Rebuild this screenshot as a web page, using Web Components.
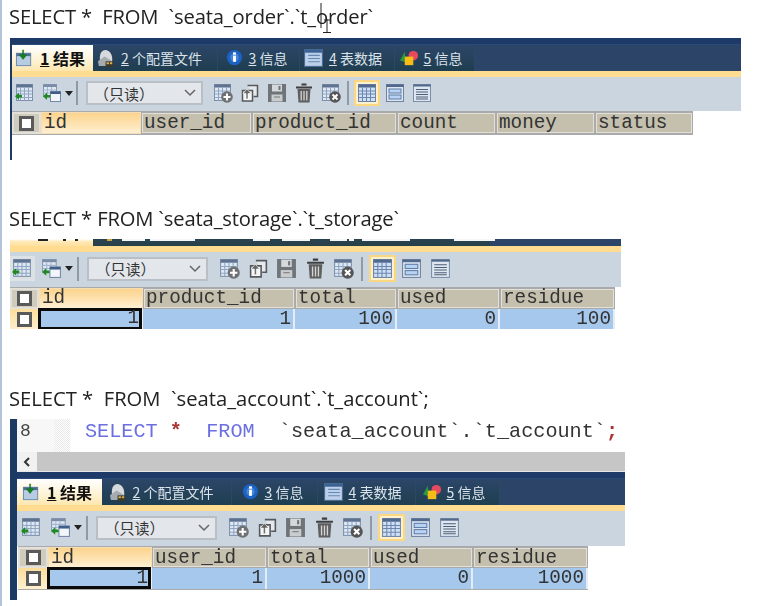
<!DOCTYPE html>
<html lang="zh"><head><meta charset="utf-8"><title>seata</title>
<style>html,body{margin:0;background:#fff;overflow:hidden}</style></head>
<body>
<sql-page>
  <sql-title first style="height:32px;padding-bottom:6px">SELECT *  FROM  `seata_order`.`t_order`<text-cursor slot="cursor"></text-cursor></sql-title>
  <result-panel edge="2" width="731" height="122">
    <rs-tabs widths="81,125,82,95,80" height="33"></rs-tabs>
    <rs-toolbar pad="3" sel="117" ico="20" gap="7" height="34"></rs-toolbar>
    <rs-grid cols="29,100,111,145,99,99,98" head="id,user_id,product_id,count,money,status" hh="22" pt="2"></rs-grid>
  </result-panel>
  <sql-title style="margin-top:41px;height:33px;padding-bottom:5px">SELECT * FROM `seata_storage`.`t_storage`</sql-title>
  <result-panel edge="0" width="611" height="90">
    <rs-strip></rs-strip>
    <rs-toolbar pad="2" sel="121" ico="21" gap="7.6" height="35" hot></rs-toolbar>
    <rs-grid cols="29,104,152,102,103,115" head="id,product_id,total,used,residue" row="1,1,100,0,100" hh="21"></rs-grid>
  </result-panel>
  <sql-title style="margin-top:52px;height:33px;padding-bottom:5px;letter-spacing:0">SELECT *  FROM  `seata_account`.`t_account`;</sql-title>
  <result-panel edge="7" width="615" height="181">
    <sql-editor>SELECT *  FROM  `seata_account`.`t_account`;</sql-editor>
    <rs-tabs widths="85,130,86,98,84" height="33"></rs-tabs>
    <rs-toolbar pad="4" sel="121" ico="21" gap="7.6" height="35"></rs-toolbar>
    <rs-grid cols="30,104,115,103,103,115" head="id,user_id,total,used,residue" row="1,1,1000,0,1000" hh="21" pt="2" vt="1" ml="1"></rs-grid>
  </result-panel>
</sql-page>
<script>
const T='<rect x="1.500" y="1.500" width="16" height="16" fill="#dfe7f2" stroke="#7d8fa8"/><rect x="1.500" y="1.500" width="16" height="3" fill="#5f7391"/><path d="M1.500 8h16M1.500 11h16M1.500 14.500h16M5.500 4.500v13M9.500 4.500v13M13.500 4.500v13" stroke="#8ea5c4" fill="none"/>';
const svg=(b,s=20)=>`<svg viewBox="0 0 20 20" width="${s}" height="${s}" aria-hidden="true">${b}</svg>`;
const ICON={
 add:T+'<path d="M4 9.500v2.500h3v2.500H4V17l-4-3.750z" fill="#1f8a22"/>',
 exp:'<rect x="1.500" y="1.500" width="13" height="12" fill="#dfe7f2" stroke="#8597b0"/><rect x="1.500" y="1.500" width="13" height="2.500" fill="#7a8ca8"/><path d="M1.500 7h13M1.500 10h13M5.500 4v9M9.500 4v9" stroke="#a4b6cf"/><rect x="8.500" y="8.500" width="10" height="10" fill="#f2f5f9" stroke="#7388a6"/><rect x="8.500" y="8.500" width="10" height="2.500" fill="#3f5f8a"/><path d="M5 9.500v2.500h3v2.500H5V17l-4-3.750z" fill="#1f8a22"/>',
 plus:T+'<circle cx="14" cy="14" r="5.800" fill="#6e7072"/><path d="M14 10.500v7M10.500 14h7" stroke="#fff" stroke-width="2"/>',
 rst:'<path d="M7.500 2.500h10v11h-4" fill="#e5e8ec" stroke="#56585b" stroke-width="1.500"/><path d="M2.500 7.500h10v10.500h-10z" fill="#f4f5f6" stroke="#56585b" stroke-width="1.500"/><path d="M8 16V10.500H11L7 6 3 10.500H6V16z" fill="#666" stroke="#fff" stroke-width=".6"/>',
 save:'<path d="M1 1h18v18H1z" fill="#6f7478"/><rect x="5" y="1.500" width="10" height="7" fill="#d5d9dc"/><rect x="11.500" y="3" width="2" height="4" fill="#6f7478"/><rect x="4.500" y="11.500" width="11" height="7" fill="#c9cccf"/><path d="M7 14h6" stroke="#777"/>',
 del:'<path d="M7.500 1.500h5M2 4.500h16" stroke="#3e3e3e" stroke-width="2"/><path d="M3.500 6h13l-1 13.500h-11z" fill="#5e5e5e"/><path d="M7.200 8v9.500M10 8v9.500M12.800 8v9.500" stroke="#d6d6d6" stroke-width="1.300"/>',
 rm:T+'<circle cx="14" cy="14" r="5.800" fill="#555"/><path d="M11.500 11.500l5 5M16.500 11.500l-5 5" stroke="#fff" stroke-width="2"/>',
 grid:'<rect x="1.500" y="1.500" width="17" height="17" fill="#cfe0f6" stroke="#6f83a1"/><rect x="1.500" y="1.500" width="17" height="3" fill="#50698c"/><path d="M1.500 8h17M1.500 11h17M1.500 14.500h17M5.500 4.500v14M9.500 4.500v14M13.500 4.500v14" stroke="#6b87ae"/>',
 form:'<rect x="1.500" y="1.500" width="17" height="17" fill="#dde6f1" stroke="#6f83a1"/><rect x="1.500" y="1.500" width="17" height="2.500" fill="#50698c"/><rect x="4" y="6" width="12" height="4" fill="#b7d2f3" stroke="#5f7da6"/><rect x="4" y="12" width="12" height="4" fill="#b7d2f3" stroke="#5f7da6"/>',
 text:'<rect x="1.500" y="1.500" width="17" height="17" fill="#dde6f1" stroke="#7b8ea8"/><rect x="1.500" y="1.500" width="17" height="2" fill="#50698c"/><path d="M4 6.500h12M4 9h12M4 11.500h12M4 14h12M4 16h12" stroke="#4e5f75" stroke-width="1"/>',
 t1:'<rect x="1.500" y="4.500" width="15" height="13" fill="#b7cbe2" stroke="#6b89ad"/><rect x="1.500" y="4.500" width="15" height="3" fill="#4e7098"/><path d="M9 1v5h3.500L8.500 11 4.500 6H8V1z" fill="#14841f" stroke="#0d6a18" stroke-width=".5"/>',
 t2:'<path d="M3 9c0-5 2.500-8 6-8s7 4 7 9v5H3z" fill="#d6dadd"/><path d="M1 13l7-5 7 4v6H2z" fill="#a5abb0"/><rect x="9" y="13" width="8" height="6" fill="#3d3a28"/><rect x="10" y="14" width="2.500" height="2" fill="#d9b455"/><rect x="13.500" y="14" width="2.500" height="2" fill="#d9b455"/>',
 t3:'<circle cx="10" cy="9" r="8" fill="#1b62c4"/><circle cx="10" cy="9" r="4.500" fill="#6fa8ee" opacity=".5"/><rect x="8.500" y="3.500" width="3" height="2.500" fill="#fff"/><rect x="8.500" y="7" width="3" height="6.500" fill="#fff"/>',
 t4:'<rect x="1.500" y="1.500" width="17" height="16" fill="#bdd0ea" stroke="#4c6c96"/><rect x="1.500" y="1.500" width="17" height="3" fill="#3d6394"/><path d="M5 7h11M5 10h11M5 13h11" stroke="#6488b5"/>',
 t5:'<path d="M0 12l5-9 1 11z" fill="#2d9a3d"/><circle cx="14" cy="7" r="5" fill="#e8495f"/><rect x="5" y="8" width="9" height="9" fill="#f6bd16"/>'
};
function def(name,fn){customElements.define(name,class extends HTMLElement{connectedCallback(){if(!this.shadowRoot){this.attachShadow({mode:'open'}).innerHTML=fn(this)}}})}
def('sql-page',()=>`<style>:host{display:block;width:762px;height:606px;border-left:2px solid #b5c3d8;overflow:hidden;filter:blur(.45px)}</style><slot></slot>`);
def('text-cursor',()=>`<style>:host{position:absolute;left:318px;top:3px;width:12px;height:31px}</style><svg width="12" height="31" aria-hidden="true"><path d="M1 0v25M7 16v13M4 17h6M3 29.500h8" stroke="#222" fill="none"/></svg>`);
def('sql-title',()=>`<style>:host{display:flex;align-items:center;position:relative;padding:0 0 4px 7px;font:20.200px "Open Sans","Noto Sans",sans-serif;color:#222;white-space:pre;letter-spacing:-.15px}</style><slot></slot><slot name="cursor"></slot>`);
def('result-panel',e=>{const w=+e.getAttribute('width'),h=+e.getAttribute('height'),b=+e.getAttribute('edge');return `<style>:host{display:block;box-sizing:border-box;margin-left:8px;width:${w}px;height:${h}px;border-left:${b}px solid #1d3a64;overflow:hidden}</style><slot></slot>`});
def('sql-editor',()=>`<style>:host{display:block}
.l{display:flex;height:33px;background:#fff;font:20.200px/25px "Liberation Mono",monospace;white-space:pre;color:#333}
.g{width:37px;background:#f7f7f7;font-size:18px;padding-left:3px;box-sizing:border-box;color:#444}
.d{width:16px;background:repeating-conic-gradient(#e8e8e8 0 25%,#fff 0 50%) 0 0/2px 2px}
.k{color:#6b6fe0}.o{color:#a33;font-weight:700}
.c{padding-left:15px}
.b{display:flex;height:19px;background:#c6c6c6;border-bottom:1px solid #e6e6e6}
.a{width:20px;background:#f1f1f1;display:flex;align-items:center;justify-content:center}</style>
<div class="l"><div class="g">8</div><div class="d"></div><div class="c"><span class="k">SELECT</span> <span class="o">*</span>  <span class="k">FROM</span>  \`seata_account\`.\`t_account\`<span class="o">;</span></div></div>
<div class="b"><div class="a"><svg width="10" height="10" aria-hidden="true"><path d="M7 1L3 5l4 4" fill="none" stroke="#333" stroke-width="2"/></svg></div></div>`);
def('rs-strip',()=>{
 const m=(a)=>a.map(([x,w,c])=>`<i style="margin-left:${x}px;width:${w}px;${c?'background:'+c:''}"></i>`).join('');
 return `<style>:host{display:flex;height:7px;background:#2b4468;overflow:hidden}
 .a,.b{display:flex;align-items:flex-start;height:7px;flex:none}
 .a{width:83px;background:linear-gradient(#fff 0,#ffeab8 35%,#ffdf9c)}
 .b{width:397px;background:linear-gradient(#2b4350,#263f47)}
 i{display:block;height:2px;background:#f4f6f7;flex:none}
 .a i{background:#222}</style>
 <div class="a">${m([[28,10],[15,3],[9,3]])}</div><div class="b">${m([[14,5,'#c9a53e'],[10,23],[5,45],[58,17],[12,28],[20,17],[2,5],[8,48],[44,41]])}</div>`});
def('rs-tabs',e=>{const W=e.getAttribute('widths').split(',').map(Number),h=+e.getAttribute('height');
const L=['结果','个配置文件','信息','表数据','信息'],PR=[5,11,5,9,7];
const tabs=L.map((t,i)=>`<div class="t ${i?'':'on'}" style="width:${W[i]}px;padding-right:${PR[i]}px">${svg(ICON['t'+(i+1)],i==3?21:19)}<span><u>${i+1}</u> ${t}</span></div>`).join('');
return `<style>:host{display:block;height:${h}px;overflow:hidden;background:#2b4468}
.top{height:6px;background:#1d3a68;border-bottom:1px solid #2a4a78}
.r{display:flex;height:26px}
.t{box-sizing:border-box;display:flex;align-items:center;justify-content:center;gap:5px;height:26px;flex:none;color:#dbe3ea;font:14px "Noto Sans CJK SC",sans-serif;background:linear-gradient(#2c4668,#1f3e50);border-right:1px solid #2b4a62;white-space:pre}
.on{background:linear-gradient(#fff,#fdf0cc 70%,#fde6ad);color:#111;font-weight:700;border:0;font-size:16px;gap:6px}
</style><div class="top"></div><div class="r">${tabs}</div>`});
def('rs-toolbar',e=>{const p=+e.getAttribute('pad'),s=+e.getAttribute('sel'),z=+e.getAttribute('ico'),g=+e.getAttribute('gap'),h=+e.getAttribute('height'),hot=e.hasAttribute('hot');
const I=n=>`<span class="i">${svg(ICON[n],z)}</span>`;
return `<style>:host{display:block;border-top:6px solid #ffdc90;background:#cbd5e0;height:${h}px;font:15px "Noto Sans CJK SC",sans-serif;color:#333}
.r{box-sizing:border-box;display:flex;align-items:center;height:100%;padding:0 0 2px ${p}px;gap:${g}px}
.i{display:flex;flex:none}
.hot{background:#dbe0e3;outline:2px solid #dde2e6}
.ar{width:0;height:0;border:4.500px solid transparent;border-top:5px solid #222;border-bottom:0;margin-left:-4px}
.sep{width:2px;height:24px;background:#8f9aa5;margin:0 1px 0 -4px;flex:none}
.s2{margin-left:-1px}
.sel{box-sizing:border-box;flex:none;width:${s}px;height:24px;border:2px solid #b9bfc5;background:#e3e6ea;display:flex;align-items:center;justify-content:space-between;padding:0 5px 0 6px;margin-right:3px}
.on{box-sizing:border-box;display:flex;padding:1px;border:2px solid #fbd782;background:#fdf0cc;margin:-2px -2px -2px -3px;flex:none}
</style><div class="r"><span class="i ${hot?'hot':''}">${svg(ICON.add,z)}</span>${I('exp')}<span class="ar"></span><span class="sep"></span>
<div class="sel"><span>（只读）</span><svg width="12" height="8" aria-hidden="true"><path d="M1 1l5 5 5-5" fill="none" stroke="#666" stroke-width="1.500"/></svg></div>
${I('plus')}${I('rst')}${I('save')}${I('del')}${I('rm')}<span class="sep s2"></span><span class="on">${svg(ICON.grid,z)}</span>${I('form')}${I('text')}</div>`});
def('rs-grid',e=>{const C=e.getAttribute('cols').split(',').map(Number),H=e.getAttribute('head').split(','),R=e.getAttribute('row'),hh=+e.getAttribute('hh'),pt=+(e.getAttribute('pt')||0),vt=+(e.getAttribute('vt')||0);
const cb='<span class="cb"></span>';
let h=`<div class="c ck">${cb}</div>`+H.map((t,i)=>`<div class="c h ${i?'':'first'}">${t}</div>`).join('');
if(R){h+=`<div class="c ckr">${cb}</div>`+R.split(',').map((t,i)=>`<div class="c v ${i?'':'sel'}">${t}</div>`).join('')}
return `<style>:host{display:block;width:max-content;margin-left:${e.getAttribute('ml')||0}px}
.g{display:grid;grid-template-columns:${C.map(x=>x+'px').join(' ')};grid-auto-rows:${hh}px;background:#f2f2f2;font:19.300px/1 "Liberation Mono",monospace;color:#333;border-bottom:1px solid #aaa;border-top:1px solid #aaa}
.c{box-sizing:border-box;display:flex;align-items:center;height:100%;white-space:pre}
.h{background:#c4c0ad;box-shadow:inset 0 0 0 1px #aaa,inset 0 0 0 2px #e2e0d8;padding:${pt}px 0 0 3px}
.first{background:linear-gradient(#fbd28a,#fee4b5 60%,#fdf1d8);box-shadow:inset 0 0 0 1px #f5deb4;padding-left:3px}
.ck{background:#cfcbbd;box-shadow:inset 0 0 0 2px #e2e0d8;justify-content:center}
.ckr{background:linear-gradient(#fcdc9c,#fff0cf);justify-content:center}
.v{background:#a6c8ec;justify-content:flex-end;padding:${vt}px 4px 0 0;box-shadow:inset -2px 0 0 #e4edf6}
.sel{box-shadow:inset 0 0 0 3px #0a0a0a;padding-right:3px;margin:-1px 1px 0 -1px;height:calc(100% + 1px)}
.cb{box-sizing:border-box;width:15px;height:15px;background:#fff;border:3px solid #5a5a5a}
</style><div class="g">${h}</div>`});
</script>
</body></html>
